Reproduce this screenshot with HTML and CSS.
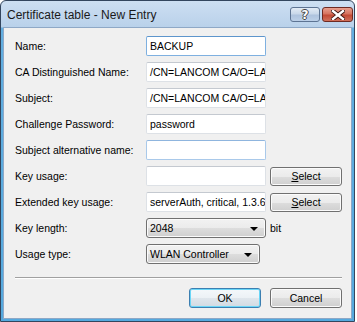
FILE: index.html
```html
<!DOCTYPE html>
<html>
<head>
<meta charset="utf-8">
<link rel="stylesheet" href="styles.css">
</head>
<body>
<div class="window">
  <div class="titlebar">
    <span class="title">Certificate table - New Entry</span>
    <div class="caption-buttons">
      <div class="cbtn help"><span class="qmark">?</span></div>
      <div class="cbtn close">
        <svg width="14" height="10" viewBox="0 0 14 10">
          <path d="M2 1 L12 9 M12 1 L2 9" stroke="#3a1410" stroke-width="4.2" stroke-linecap="square" fill="none"/>
          <path d="M2 1 L12 9 M12 1 L2 9" stroke="#ffffff" stroke-width="2.4" stroke-linecap="square" fill="none"/>
        </svg>
      </div>
    </div>
  </div>
  <div class="client">
    <div class="form">
      <span class="lbl">Name:</span>
      <div class="edit focus">BACKUP</div>
      <span></span>

      <span class="lbl">CA Distinguished Name:</span>
      <div class="edit">/CN=LANCOM CA/O=LANCOM SYSTEMS</div>
      <span></span>

      <span class="lbl">Subject:</span>
      <div class="edit">/CN=LANCOM CA/O=LANCOM SYSTEMS</div>
      <span></span>

      <span class="lbl">Challenge Password:</span>
      <div class="edit">password</div>
      <span></span>

      <span class="lbl">Subject alternative name:</span>
      <div class="edit hover"></div>
      <span></span>

      <span class="lbl">Key usage:</span>
      <div class="edit"></div>
      <div class="btn sel"><span><u>S</u>elect</span></div>

      <span class="lbl">Extended key usage:</span>
      <div class="edit">serverAuth, critical, 1.3.6.1.5.5.7.3.1</div>
      <div class="btn sel"><span><u>S</u>elect</span></div>

      <span class="lbl">Key length:</span>
      <div class="combo wide"><span>2048</span><i class="arrow"></i></div>
      <span class="unit">bit</span>

      <span class="lbl">Usage type:</span>
      <div class="combo narrow"><span>WLAN Controller</span><i class="arrow"></i></div>
      <span></span>
    </div>
    <div class="sep"></div>
    <div class="actions">
      <div class="btn default">OK</div>
      <div class="btn">Cancel</div>
    </div>
  </div>
</div>
</body>
</html>
```

FILE: styles.css
```css
* { box-sizing: border-box; }
html, body { margin: 0; padding: 0; background: #ffffff; }
body {
  width: 357px;
  height: 322px;
  overflow: hidden;
  font-family: "Liberation Sans", Arial, sans-serif;
  font-size: 10.5px;
  color: #000;
}
.window {
  width: 355px;
  height: 322px;
  border: 1px solid #33465e;
  border-radius: 6px 6px 0 0;
  background: linear-gradient(#cddff2 0px, #b9d1ea 26px, #62aee0 27px, #55a9de 100%);
  display: flex;
  flex-direction: column;
}
.titlebar {
  height: 26px;
  display: flex;
  align-items: flex-start;
  justify-content: space-between;
  padding: 0 0 0 6px;
  flex: none;
}
.title {
  font-size: 12px;
  color: #1a1a1a;
  line-height: 14px;
  margin-top: 7px;
}
.caption-buttons {
  display: flex;
  gap: 2px;
  margin-top: 6px;
  margin-right: 1px;
}
.cbtn {
  height: 15px;
  border: 1px solid #5d7493;
  border-radius: 3px;
  display: flex;
  align-items: center;
  justify-content: center;
}
.help {
  width: 30px;
  background: linear-gradient(#e2ebf5 0%, #c9d8ea 45%, #aec3de 55%, #bcd0e8 100%);
}
.qmark {
  font-family: "DejaVu Sans", sans-serif;
  font-weight: bold;
  font-size: 12px;
  line-height: 12px;
  color: #fff;
  text-shadow: 1px 0 0 #444, -1px 0 0 #444, 0 1px 0 #444, 0 -1px 0 #444;
}
.close {
  width: 31px;
  border-color: #6e2a22;
  background: linear-gradient(#e8a08f 0%, #d6735f 45%, #c24a35 55%, #d0705a 100%);
}
.client {
  flex: 1;
  margin: 0 2px 2px 2px;
  background: #f0f0f0;
  border: 1px solid #8ea8c6;
  padding: 8px 0 0 11px;
}
.form {
  display: grid;
  grid-template-columns: 131px 120px 76px;
  grid-auto-rows: 20px;
  row-gap: 6px;
  align-items: center;
}
.lbl { white-space: nowrap; }
.edit {
  height: 20px;
  background: #fff;
  border: 1px solid #dde1e6;
  border-top-color: #c4c9d0;
  border-radius: 2px;
  padding: 0 3px;
  line-height: 18px;
  white-space: nowrap;
  overflow: hidden;
}
.edit.focus { border-color: #7eb0e0; border-top-color: #5d95cc; }
.edit.hover { border-color: #a9c9ea; border-top-color: #8fb5de; }
.btn {
  height: 20px;
  border: 1px solid #707070;
  border-radius: 3px;
  background: linear-gradient(#f2f2f2 0%, #ebebeb 50%, #dddddd 51%, #cfcfcf 100%);
  box-shadow: inset 0 0 0 1px #fbfbfb;
  display: flex;
  align-items: center;
  justify-content: center;
  line-height: 14px;
}
.btn.sel {
  width: 72px;
  height: 19px;
  justify-self: end;
}
.unit { padding-left: 4px; }
.combo {
  height: 20px;
  border: 1px solid #707070;
  border-radius: 3px;
  background: linear-gradient(#f2f2f2 0%, #ebebeb 50%, #dddddd 51%, #cfcfcf 100%);
  box-shadow: inset 0 0 0 1px #fbfbfb;
  display: flex;
  align-items: center;
  justify-content: space-between;
  padding: 0 7px 0 3px;
}
.combo.wide { width: 120px; }
.combo.narrow { width: 114px; }
.arrow {
  width: 0;
  height: 0;
  border-left: 4px solid transparent;
  border-right: 4px solid transparent;
  border-top: 4px solid #000;
  margin-top: 1px;
}
.sep {
  width: 327px;
  margin-top: 13px;
  border-top: 1px solid #a0a0a0;
  border-bottom: 1px solid #ffffff;
}
.actions {
  display: flex;
  justify-content: flex-end;
  gap: 9px;
  width: 327px;
  margin-top: 9px;
}
.actions .btn { width: 72px; height: 20px; }
.btn.default {
  border-color: #3c7fb1;
  box-shadow: inset 0 0 0 1px #6ad6f7;
  background: linear-gradient(#f4f8fb 0%, #ecf1f5 50%, #dfe6ec 51%, #d2dae2 100%);
}
```
